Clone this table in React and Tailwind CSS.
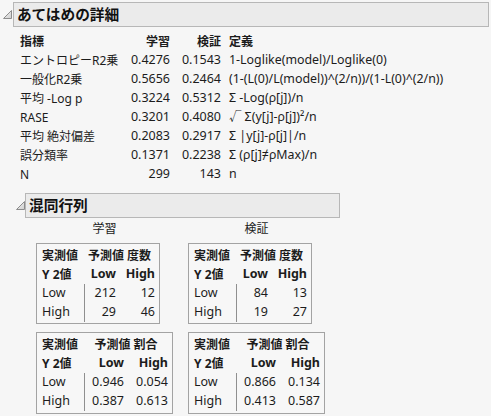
const font = { fontFamily: '"Noto Sans", "Noto Sans CJK JP", sans-serif' };

const fitRows = [
  ["エントロピーR2乗", "0.4276", "0.1543", "1-Loglike(model)/Loglike(0)"],
  ["一般化R2乗", "0.5656", "0.2464", "(1-(L(0)/L(model))^(2/n))/(1-L(0)^(2/n))"],
  ["平均 -Log p", "0.3224", "0.5312", "Σ -Log(ρ[j])/n"],
  ["RASE", "0.3201", "0.4080", "√ Σ(y[j]-ρ[j])²/n"],
  ["平均 絶対偏差", "0.2083", "0.2917", "Σ |y[j]-ρ[j]|/n"],
  ["誤分類率", "0.1371", "0.2238", "Σ (ρ[j]≠ρMax)/n"],
  ["N", "299", "143", "n"],
];

const Triangle = ({ className }) => (
  <svg width="9" height="9" viewBox="0 0 9 9" className={className}>
    <defs>
      <linearGradient id="tri" x1="0" y1="0" x2="1" y2="1">
        <stop offset="0" stopColor="#f4f4f4" />
        <stop offset="1" stopColor="#cfcfcf" />
      </linearGradient>
    </defs>
    <polygon points="0.5,8.5 8.5,0.5 8.5,8.5" fill="url(#tri)" stroke="#8c8c8c" strokeWidth="1" />
  </svg>
);

const OutlineHeader = ({ title, className }) => (
  <div
    className={`h-[25px] flex items-center pl-[3px] bg-[#ebebeb] border border-[#b7b7b7] text-[14.7px] font-bold text-[#111] ${className}`}
  >
    {title}
  </div>
);

const ConfTable = ({ kind, cols, rows }) => (
  <div
    className={`border border-[#a3a3a3] bg-[#f7f7f7] pl-[5px] pr-[4px] pt-[2px] pb-[1px] grid self-start ${cols}`}
  >
    <div className="h-[19px] flex items-center font-bold">実測値</div>
    <div className="col-span-2 h-[19px] flex items-center justify-center font-bold">予測値 {kind}</div>
    <div className="h-[19px] flex items-center font-bold">Y 2値</div>
    <div className="h-[19px] flex items-center justify-end font-bold text-[12.5px]">Low</div>
    <div className="h-[19px] flex items-center justify-end font-bold text-[12.5px]">High</div>
    {rows.map((r) => (
      <>
        <div key={r[0]} className="h-[19px] flex items-center text-[12.5px]">{r[0]}</div>
        <div className="h-[19px] flex items-center justify-end border-l border-[#8f8f8f] text-[12.5px]">{r[1]}</div>
        <div className="h-[19px] flex items-center justify-end text-[12.5px]">{r[2]}</div>
      </>
    ))}
  </div>
);

export default function App() {
  return (
    <div className="min-h-[416px] w-full bg-[#f6f6f6] text-[12px] text-[#1c1c1c] pt-[2px]" style={font}>
      <div className="flex items-center">
        <Triangle className="ml-[3px] mr-[1px] mb-[1px]" />
        <OutlineHeader title="あてはめの詳細" className="flex-1 mr-[2px]" />
      </div>

      <div className="grid grid-cols-[110px_40px_51px_1fr] pl-[20px] mt-[5px]">
        <div className="h-[19px] flex items-center font-bold">指標</div>
        <div className="h-[19px] flex items-center justify-end font-bold">学習</div>
        <div className="h-[19px] flex items-center justify-end font-bold">検証</div>
        <div className="h-[19px] flex items-center pl-[8px] font-bold">定義</div>
        {fitRows.map((r) => (
          <>
            <div key={r[0]} className="h-[19px] flex items-center">{r[0]}</div>
            <div className="h-[19px] flex items-center justify-end text-[12.5px]">{r[1]}</div>
            <div className="h-[19px] flex items-center justify-end text-[12.5px]">{r[2]}</div>
            <div className="h-[19px] flex items-center pl-[8px] whitespace-nowrap text-[12.4px]">{r[3]}</div>
          </>
        ))}
      </div>

      <div className="flex items-center mt-[9px] ml-[16px]">
        <Triangle className="mr-[0px]" />
        <OutlineHeader title="混同行列" className="w-[315px]" />
      </div>

      <div className="flex gap-[15px] ml-[36px]">
        <div className="w-[137px] flex flex-col">
          <div className="h-[19px] mt-[1px] mb-[5px] flex items-center justify-center">学習</div>
          <ConfTable
            kind="度数"
            cols="grid-cols-[42px_32px_39px]"
            rows={[["Low", "212", "12"], ["High", "29", "46"]]}
          />
          <div className="h-[8px]" />
          <ConfTable
            kind="割合"
            cols="grid-cols-[42px_40px_44px] pb-[2px]"
            rows={[["Low", "0.946", "0.054"], ["High", "0.387", "0.613"]]}
          />
        </div>
        <div className="w-[137px] flex flex-col">
          <div className="h-[19px] mt-[1px] mb-[5px] flex items-center justify-center">検証</div>
          <ConfTable
            kind="度数"
            cols="grid-cols-[42px_32px_39px]"
            rows={[["Low", "84", "13"], ["High", "19", "27"]]}
          />
          <div className="h-[8px]" />
          <ConfTable
            kind="割合"
            cols="grid-cols-[42px_40px_44px] pb-[2px]"
            rows={[["Low", "0.866", "0.134"], ["High", "0.413", "0.587"]]}
          />
        </div>
      </div>
    </div>
  );
}
